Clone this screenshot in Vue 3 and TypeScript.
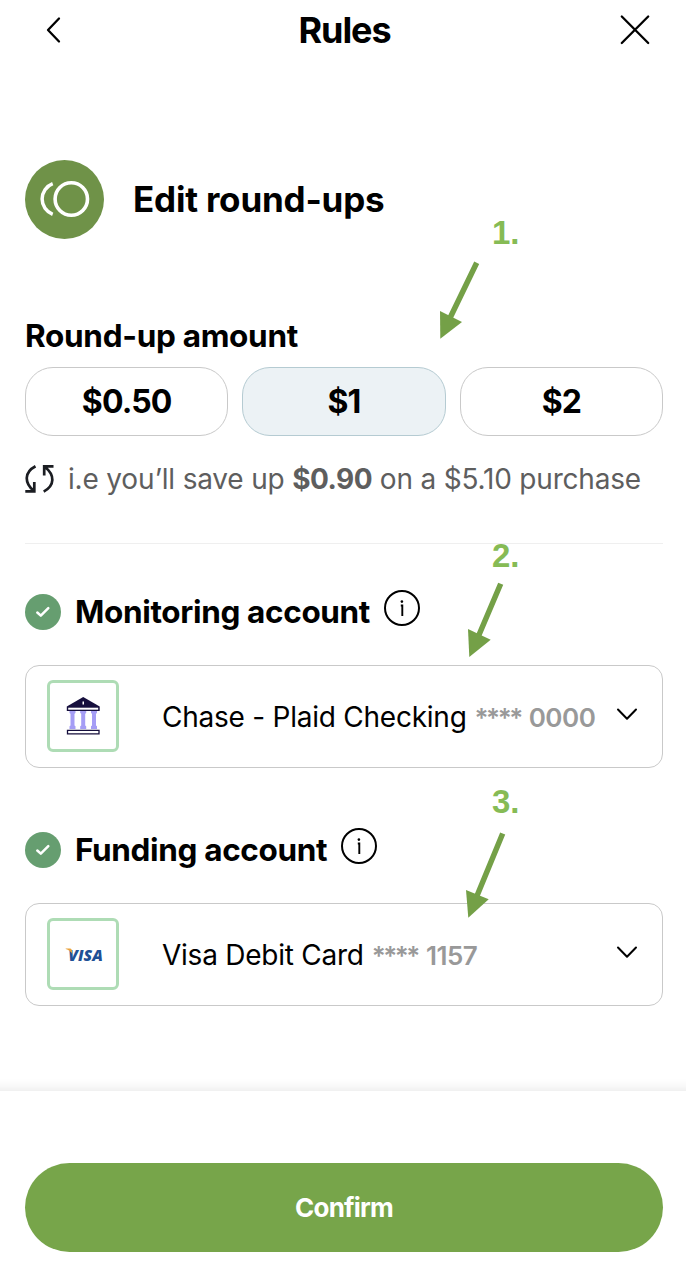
<script setup lang="ts">
import { ref } from 'vue'

interface Account {
  title: string
  name: string
  digits: string
  kind: 'bank' | 'visa'
}

const amounts = ['$0.50', '$1', '$2']
const selected = ref('$1')
const accounts: Account[] = [
  { title: 'Monitoring account', name: 'Chase - Plaid Checking', digits: '0000', kind: 'bank' },
  { title: 'Funding account', name: 'Visa Debit Card', digits: '1157', kind: 'visa' },
]
</script>

<template>
  <main class="screen">
    <header class="bar">
      <svg class="back" width="20" height="32" viewBox="0 0 20 32"><path d="M16 4.500 5 16 16 27.500" /></svg>
      <h1>Rules</h1>
      <svg class="close" width="32" height="32" viewBox="0 0 32 32"><path d="M2.800 2.500 29.200 29M29.200 2.500 2.800 29" /></svg>
    </header>

    <section class="hero">
      <svg width="79" height="79" viewBox="0 0 79 79">
        <circle cx="39.500" cy="39.500" r="39.500" fill="#6f9248" />
        <circle cx="46.300" cy="39" r="16.200" fill="none" stroke="#fff" stroke-width="3.600" />
        <path d="M27.700 23.600A16.500 16.500 0 0 0 27.700 54.400" fill="none" stroke="#fff" stroke-width="3.500" />
      </svg>
      <h2>Edit round-ups</h2>
    </section>

    <section class="rounding">
      <h3>Round-up amount</h3>
      <div class="amounts">
        <button v-for="a in amounts" :key="a" :class="{ on: a === selected }" @click="selected = a">{{ a }}</button>
      </div>
      <p class="hint">
        <svg width="30" height="30" viewBox="0 0 30 30">
          <path d="M10.500 2.200C-.5 8-1 18.500 8.500 26.500M.3 27.300H9.300V18" />
          <path d="M18.700 27.600C30 21.500 30 11 20 3M28.500 2.300H19.200V11.500" />
        </svg>
        <span>i.e you’ll save up <b>$0.90</b> on a $5.10 purchase</span>
      </p>
    </section>

    <section v-for="acc in accounts" :key="acc.title" class="account">
      <div class="heading">
        <svg width="36" height="36" viewBox="0 0 36 36">
          <circle cx="18" cy="18" r="18" fill="#669e70" />
          <path d="M12.300 18.500 15.800 21.700 23.300 14.200" fill="none" stroke="#fff" stroke-width="2.500" stroke-linecap="round" stroke-linejoin="round" />
        </svg>
        <h3>{{ acc.title }}</h3>
        <svg class="info" width="36" height="36" viewBox="0 0 36 36">
          <circle cx="18" cy="18" r="17" fill="none" stroke="#000" stroke-width="2" />
          <path d="M16.800 15.500H18.300V26" fill="none" stroke="#000" stroke-width="1.900" />
          <circle cx="17.900" cy="11.600" r="1.300" />
        </svg>
      </div>
      <div class="card">
        <div class="logo">
          <svg v-if="acc.kind === 'bank'" width="34" height="38" viewBox="0 0 34 38">
            <path d="M.8 9.500 17.200 0 33.700 9.500V14H.8Z" fill="#160f3d" />
            <path d="M2.200 10.700H32.200V12.700H2.200Z" fill="#fff" />
            <path d="M16.500 4.500h1.500v3h-1.500Z" fill="#fff" />
            <g fill="#a59df5">
              <path d="M3.500 14h6v2l-1 .8v11.700l1 .8V32h-6v-2.700l1-.8V16.800l-1-.8Z" />
              <path d="M14.200 14h6v2l-1 .8v11.700l1 .8V32h-6v-2.700l1-.8V16.800l-1-.8Z" />
              <path d="M25 14h6v2l-1 .8v11.700l1 .8V32h-6v-2.700l1-.8V16.800l-1-.8Z" />
            </g>
            <path d="M1.500 33.400H33V36.800H1.500Z" fill="#fff" stroke="#160f3d" stroke-width="1.300" />
          </svg>
          <svg v-else width="44" height="30" viewBox="0 0 44 30">
            <text x="7.300" y="21.800" textLength="34.500" lengthAdjust="spacingAndGlyphs">VISA</text>
            <path d="M4.700 9.600H9.200Q10.600 9.800 10.800 11.300L11.500 15.300Q9.200 11.300 4.700 10.100Z" fill="#e9a23b" />
          </svg>
        </div>
        <span class="name">{{ acc.name }}</span>
        <span class="digits"><span class="mask">****</span><span>{{ acc.digits }}</span></span>
        <svg class="chevron" width="22" height="14" viewBox="0 0 22 14"><path d="M2 2.500 11 11.700 20 2.500" /></svg>
      </div>
    </section>

    <footer>
      <button class="confirm">Confirm</button>
    </footer>

    <svg class="arrows" width="686" height="1288" viewBox="0 0 686 1288">
      <g stroke="#74a047" stroke-width="5.500">
        <path d="M476.700 262.700 450 318M500.700 583.700 478.500 636M502.700 833.500 476.500 897" />
      </g>
      <g fill="#74a047">
        <path d="M440 311 462 322 440.300 338.700Z" />
        <path d="M468 629 490.700 639.700 469.300 657Z" />
        <path d="M466 890 488.700 899.300 468.300 917.700Z" />
      </g>
    </svg>
    <span class="step one">1.</span>
    <span class="step two">2.</span>
    <span class="step three">3.</span>
  </main>
</template>

<style>
body { margin: 0; background: #fff; }
</style>

<style scoped>
.screen {
  position: relative;
  box-sizing: border-box;
  width: 686px;
  height: 1288px;
  display: flex;
  flex-direction: column;
  overflow: hidden;
  background: #fff;
  color: #000;
  font-family: Inter, "Liberation Sans", sans-serif;
}
h1, h2, h3, p { margin: 0; white-space: nowrap; }
h1, h2, h3 { font-weight: 650; }
button { font-family: inherit; padding: 0; color: inherit; }
.bar {
  height: 60px;
  padding: 0 35px 0 43px;
  display: grid;
  grid-template-columns: 27px 1fr 32px;
  align-items: center;
}
.bar path { fill: none; stroke: #000; stroke-width: 2.300; stroke-linecap: round; stroke-linejoin: round; }
h1 { font-size: 36px; text-align: center; letter-spacing: -1.100px; }
.hero { margin: 100px 23px 0 25px; height: 79px; display: flex; align-items: center; gap: 29px; }
h2 { margin-top: -2px; font-size: 35px; letter-spacing: -.2px; }
.rounding { margin: 77px 23px 0 25px; height: 227px; border-bottom: 1px solid #efefef; }
h3 { font-size: 31.500px; line-height: 40px; letter-spacing: -.3px; }
.amounts { margin-top: 11px; display: grid; grid-template-columns: repeat(3, 1fr); gap: 14px; }
.amounts button {
  height: 69px;
  border: 1px solid #c9c9c9;
  border-radius: 28px;
  background: #fff;
  font-size: 32px;
  font-weight: 650;
  letter-spacing: -.9px;
}
.amounts .on { background: #ecf2f5; border-color: #b5cbd2; }
.hint { margin-top: 23px; height: 40px; display: flex; align-items: center; gap: 13px; font-size: 28px; letter-spacing: -.19px; color: #5e5e5e; }
.hint b { font-weight: 700; letter-spacing: -.5px; }
.hint path { fill: none; stroke: #1b1d22; stroke-width: 2.700; }
.account { margin: 50px 23px 0 25px; height: 188px; }
.heading { height: 36px; display: flex; align-items: center; gap: 14px; }
.heading h3 { letter-spacing: -.35px; }
.info { margin-top: -8px; }
.card {
  box-sizing: border-box;
  margin-top: 35px;
  height: 103px;
  padding: 0 24px 0 21px;
  border: 1px solid #c9c9c9;
  border-radius: 14px;
  display: flex;
  align-items: center;
}
.logo {
  box-sizing: border-box;
  width: 72px;
  height: 72px;
  margin-top: -1px;
  border: 3px solid #aedcb5;
  border-radius: 6px;
  display: flex;
  align-items: center;
  justify-content: center;
}
.logo text { font: italic 800 16.500px "Open Sans", sans-serif; fill: #1f5096; }
.name { margin-left: 43px; font-size: 28px; letter-spacing: -.24px; white-space: nowrap; }
.digits { margin: 2px 0 0 8px; display: flex; align-items: center; gap: 8px; font-size: 26px; font-weight: 600; letter-spacing: -.5px; color: #999; white-space: nowrap; }
.mask { letter-spacing: -2.500px; }
.chevron { margin-left: auto; margin-top: -6px; }
.chevron path { fill: none; stroke: #000; stroke-width: 2; stroke-linecap: round; stroke-linejoin: round; }
footer {
  margin: auto -20px 0;
  box-sizing: border-box;
  height: 197px;
  padding: 72px 43px 0 45px;
  box-shadow: 0 0 13px rgba(0, 0, 0, .12);
}
.confirm {
  width: 100%;
  height: 89px;
  border: 0;
  border-radius: 44.500px;
  background: #77a54a;
  color: #fff;
  font-size: 26px;
  font-weight: 650;
  letter-spacing: -.8px;
}
.arrows { position: absolute; inset: 0; pointer-events: none; }
.step {
  position: absolute;
  font: 700 33px/38px "Liberation Sans", Arial, sans-serif;
  color: #86bb55;
}
.one { left: 492px; top: 214px; }
.two { left: 492px; top: 537px; }
.three { left: 492px; top: 783px; }
</style>
